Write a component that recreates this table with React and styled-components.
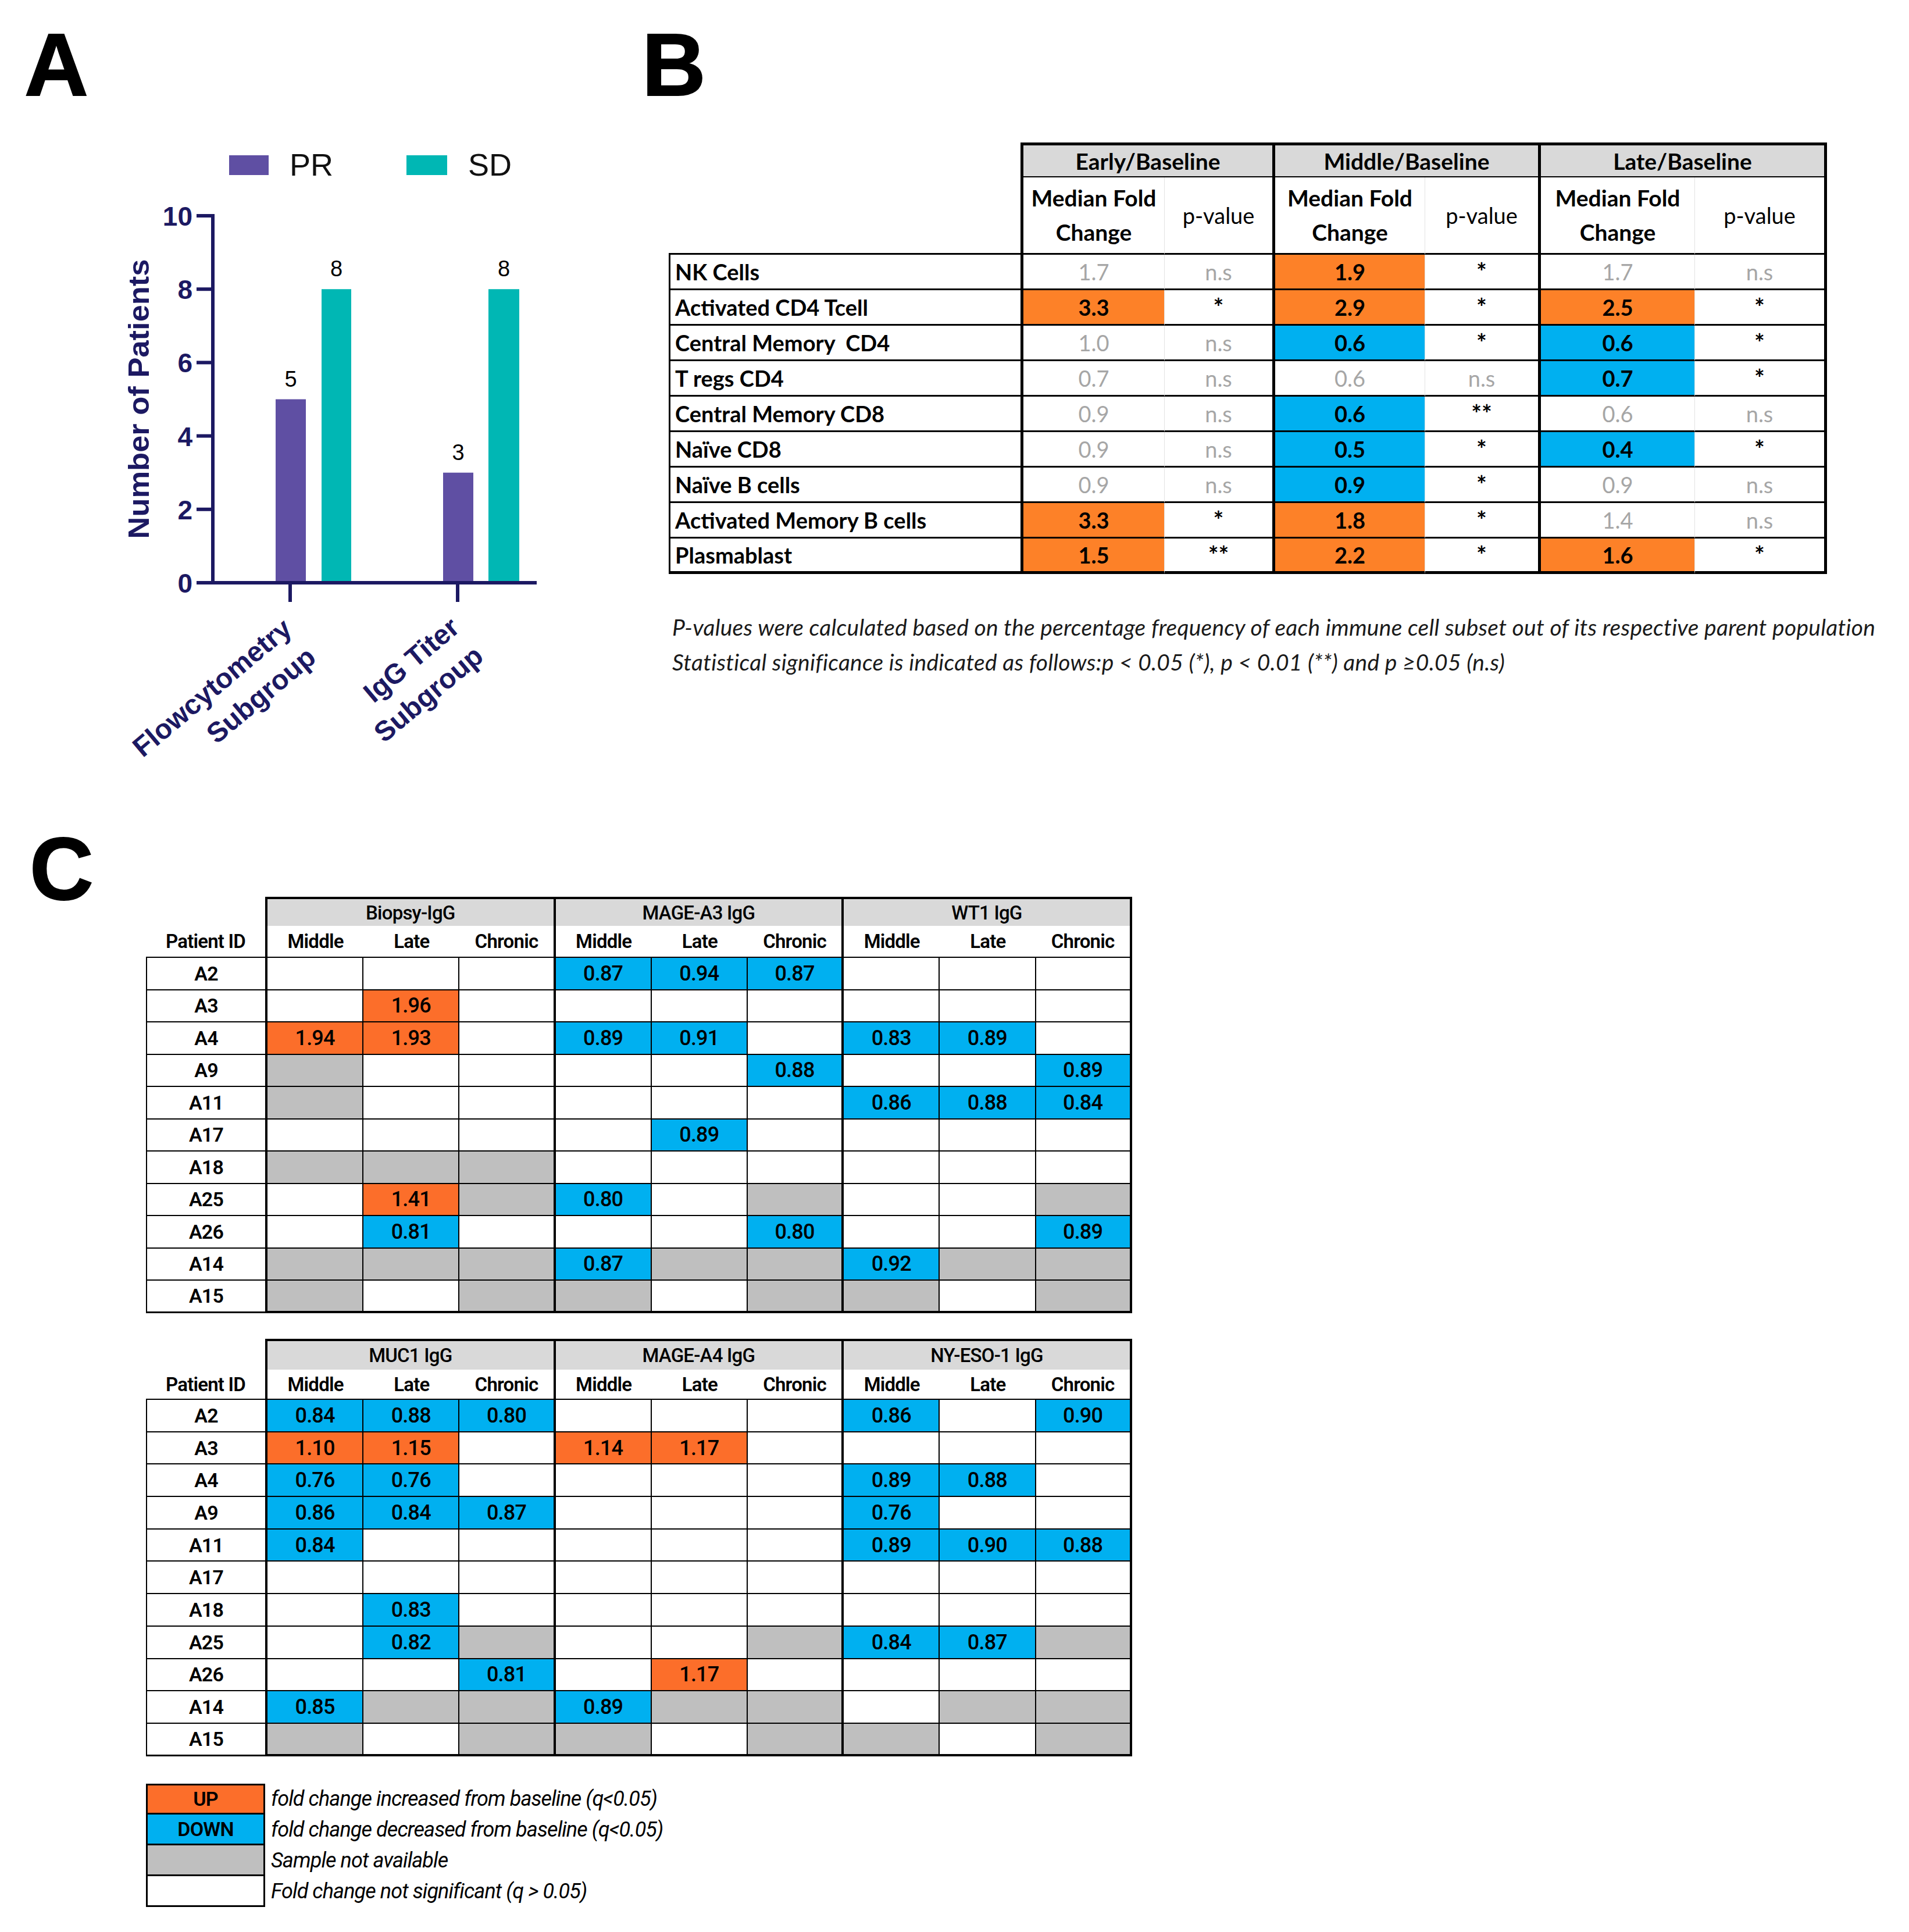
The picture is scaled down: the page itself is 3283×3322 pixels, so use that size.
import React from 'react';
import styled, { createGlobalStyle } from 'styled-components';

const ORANGE_B = '#fd8128';
const ORANGE_C = '#fc6e2a';
const BLUE = '#00b0f0';
const NA_GREY = '#bfbfbf';
const HEAD_GREY = '#d9d9d9';
const NAVY = '#1c1962';
const PURPLE = '#5f4fa3';
const TEAL = '#00b7b4';

const GlobalStyle = createGlobalStyle`
  html, body {
    margin: 0;
    padding: 0;
    background: #fff;
  }
  body {
    font-family: Lato, "Open Sans", sans-serif;
    color: #000;
  }
`;

const Page = styled.div`
  width: 3283px;
  height: 3322px;
  padding-top: 56px;
  box-sizing: border-box;
  overflow: hidden;
`;

const TopRow = styled.div`
  display: flex;
  height: 1383px;
`;

const PanelLabel = styled.div`
  font-family: "Liberation Sans", Arial, sans-serif;
  font-weight: 700;
  font-size: 152px;
  line-height: 110px;
  height: 100px;
  margin-left: ${p => p.$left}px;
  -webkit-text-stroke: 2px #000;
`;

const PanelA = styled.div`
  width: 1112px;
  display: flex;
  flex-direction: column;
`;

const PanelB = styled.div`
  flex: 1;
  display: flex;
  flex-direction: column;
`;

const ChartSvg = styled.svg`
  display: block;
  margin-top: 44px;
`;

/* ---------- panel B table ---------- */

const BGrid = styled.div`
  display: grid;
  grid-template-columns: 610px 243px 190px 258px 199px 265px 227px;
  grid-template-rows: 60px 133px repeat(9, 61px);
  margin: 89px 0 0 38px;
  width: 1992px;
  font-family: Lato, "Open Sans", sans-serif;
  font-size: 38px;
`;

const BCorner = styled.div`
  grid-column: 1;
  grid-row: 1 / span 2;
  border-right: 5px solid #000;
  border-bottom: 3px solid #000;
`;

const BGroupHead = styled.div`
  grid-column: span 2;
  background: ${HEAD_GREY};
  border-top: 5px solid #000;
  border-right: 5px solid #000;
  border-bottom: 2px solid #000;
  display: flex;
  align-items: center;
  justify-content: center;
  font-weight: 700;
  font-size: 39px;
`;

const BSubHead = styled.div`
  border-right: ${p => (p.$end ? '5px solid #000' : '1px solid #e2e2e2')};
  border-bottom: 3px solid #000;
  display: flex;
  align-items: center;
  justify-content: center;
  text-align: center;
  font-weight: ${p => (p.$bold ? 700 : 400)};
  font-size: ${p => (p.$bold ? 39 : 38)}px;
  line-height: 59px;
`;

const BRowLabel = styled.div`
  border-left: 3px solid #000;
  border-right: 5px solid #000;
  border-bottom: ${p => (p.$last ? 5 : 3)}px solid #000;
  display: flex;
  align-items: center;
  padding-left: 8px;
  font-weight: 700;
  white-space: pre;
`;

const BCell = styled.div`
  background: ${p => (p.$tone === 'o' ? ORANGE_B : p.$tone === 'b' ? BLUE : '#fff')};
  color: ${p => (p.$muted ? '#a6a6a6' : '#000')};
  font-weight: ${p => (p.$muted ? 400 : 700)};
  font-size: ${p => (p.$star ? 42 : 38)}px;
  border-right: ${p => (p.$end ? '5px solid #000' : '1px solid #e2e2e2')};
  border-bottom: ${p => (p.$last ? 5 : 3)}px solid #000;
  display: flex;
  align-items: center;
  justify-content: center;
`;

const Caption = styled.div`
  margin: 61px 0 0 44px;
  font-family: Lato, "Open Sans", sans-serif;
  font-style: italic;
  font-size: 39px;
  letter-spacing: 0.25px;
  line-height: 60px;
  color: #1a1a1a;
  white-space: nowrap;
`;

/* ---------- panel C tables ---------- */

const PanelC = styled.div`
  display: flex;
  flex-direction: column;
`;

const CGrid = styled.div`
  display: grid;
  grid-template-columns: 209px repeat(9, 165.2px);
  grid-template-rows: ${p => p.$head}px ${p => p.$sub}px repeat(11, ${p => p.$row}px);
  margin: ${p => p.$top}px 0 0 251px;
  width: 1696px;
  font-family: Roboto, "Open Sans", sans-serif;
  font-weight: 500;
`;

const CCorner = styled.div`
  border-right: 4px solid #000;
`;

const CGroupHead = styled.div`
  grid-column: span 3;
  background: ${HEAD_GREY};
  border-top: 4px solid #000;
  border-right: 4px solid #000;
  display: flex;
  align-items: center;
  justify-content: center;
  font-size: 33px;
  letter-spacing: -0.8px;
`;

const CSubHead = styled.div`
  border-right: ${p => (p.$end ? '4px solid #000' : 'none')};
  border-bottom: 2px solid #000;
  display: flex;
  align-items: center;
  justify-content: center;
  font-size: 33px;
  font-weight: 600;
  letter-spacing: -0.8px;
  white-space: nowrap;
`;

const CRowLabel = styled.div`
  border-left: 2px solid #000;
  border-right: 4px solid #000;
  border-bottom: ${p => (p.$last ? 3 : 2)}px solid #000;
  display: flex;
  align-items: center;
  justify-content: center;
  font-size: 34px;
  font-weight: 600;
  letter-spacing: -0.8px;
`;

const CCell = styled.div`
  background: ${p =>
    p.$tone === 'o' ? ORANGE_C : p.$tone === 'b' ? BLUE : p.$tone === 'g' ? NA_GREY : '#fff'};
  border-right: ${p => (p.$end ? 4 : 2)}px solid #000;
  border-bottom: ${p => (p.$last ? 4 : 2)}px solid #000;
  display: flex;
  align-items: center;
  justify-content: center;
  font-size: 36px;
  letter-spacing: -0.8px;
`;

const Legend = styled.div`
  display: grid;
  grid-template-columns: 205px auto;
  grid-auto-rows: 53px;
  margin: 47px 0 0 251px;
`;

const Swatch = styled.div`
  background: ${p => p.$bg};
  border: 3px solid #000;
  border-top-width: ${p => (p.$first ? 3 : 0)}px;
  display: flex;
  align-items: center;
  justify-content: center;
  font-family: Roboto, "Open Sans", sans-serif;
  font-weight: 600;
  font-size: 34px;
  letter-spacing: -0.8px;
`;

const LegendText = styled.div`
  display: flex;
  align-items: center;
  padding-left: 10px;
  font-family: Roboto, "Open Sans", sans-serif;
  font-style: italic;
  font-size: 36px;
  letter-spacing: -0.9px;
  white-space: nowrap;
`;

/* ---------- data ---------- */

const bRows = [
  ['NK Cells', '1.7', 'n.s', 'o1.9', '*', '1.7', 'n.s'],
  ['Activated CD4 Tcell', 'o3.3', '*', 'o2.9', '*', 'o2.5', '*'],
  ['Central Memory  CD4', '1.0', 'n.s', 'b0.6', '*', 'b0.6', '*'],
  ['T regs CD4', '0.7', 'n.s', '0.6', 'n.s', 'b0.7', '*'],
  ['Central Memory CD8', '0.9', 'n.s', 'b0.6', '**', '0.6', 'n.s'],
  ['Naïve CD8', '0.9', 'n.s', 'b0.5', '*', 'b0.4', '*'],
  ['Naïve B cells', '0.9', 'n.s', 'b0.9', '*', '0.9', 'n.s'],
  ['Activated Memory B cells', 'o3.3', '*', 'o1.8', '*', '1.4', 'n.s'],
  ['Plasmablast', 'o1.5', '**', 'o2.2', '*', 'o1.6', '*'],
];

const ids = ['A2', 'A3', 'A4', 'A9', 'A11', 'A17', 'A18', 'A25', 'A26', 'A14', 'A15'];

const cTop = {
  groups: ['Biopsy-IgG', 'MAGE-A3 IgG', 'WT1 IgG'],
  rows: [
    ['', '', '', 'b0.87', 'b0.94', 'b0.87', '', '', ''],
    ['', 'o1.96', '', '', '', '', '', '', ''],
    ['o1.94', 'o1.93', '', 'b0.89', 'b0.91', '', 'b0.83', 'b0.89', ''],
    ['g', '', '', '', '', 'b0.88', '', '', 'b0.89'],
    ['g', '', '', '', '', '', 'b0.86', 'b0.88', 'b0.84'],
    ['', '', '', '', 'b0.89', '', '', '', ''],
    ['g', 'g', 'g', '', '', '', '', '', ''],
    ['', 'o1.41', 'g', 'b0.80', '', 'g', '', '', 'g'],
    ['', 'b0.81', '', '', '', 'b0.80', '', '', 'b0.89'],
    ['g', 'g', 'g', 'b0.87', 'g', 'g', 'b0.92', 'g', 'g'],
    ['g', '', 'g', 'g', '', 'g', 'g', '', 'g'],
  ],
};

const cBottom = {
  groups: ['MUC1 IgG', 'MAGE-A4 IgG', 'NY-ESO-1 IgG'],
  rows: [
    ['b0.84', 'b0.88', 'b0.80', '', '', '', 'b0.86', '', 'b0.90'],
    ['o1.10', 'o1.15', '', 'o1.14', 'o1.17', '', '', '', ''],
    ['b0.76', 'b0.76', '', '', '', '', 'b0.89', 'b0.88', ''],
    ['b0.86', 'b0.84', 'b0.87', '', '', '', 'b0.76', '', ''],
    ['b0.84', '', '', '', '', '', 'b0.89', 'b0.90', 'b0.88'],
    ['', '', '', '', '', '', '', '', ''],
    ['', 'b0.83', '', '', '', '', '', '', ''],
    ['', 'b0.82', 'g', '', '', 'g', 'b0.84', 'b0.87', 'g'],
    ['', '', 'b0.81', '', 'o1.17', '', '', '', ''],
    ['b0.85', 'g', 'g', 'b0.89', 'g', 'g', '', 'g', 'g'],
    ['g', '', 'g', 'g', '', 'g', 'g', '', 'g'],
  ],
};

const tone = s => (s && 'obg'.includes(s[0]) ? s[0] : null);
const text = s => (tone(s) ? s.slice(1) : s);
const isStar = s => s === '*' || s === '**';

/* ---------- panel A chart ---------- */

const Y0 = 1002;
const UNIT = (1002 - 371) / 10;
const yOf = v => Y0 - v * UNIT;

const bars = [
  { x: 474, w: 52, v: 5, c: PURPLE },
  { x: 553, w: 51, v: 8, c: TEAL },
  { x: 762, w: 52, v: 3, c: PURPLE },
  { x: 840, w: 53, v: 8, c: TEAL },
];

const Chart = () => (
  <ChartSvg width="1112" height="1130" viewBox="0 200 1112 1130">
    <rect x="394" y="267" width="68" height="34" fill={PURPLE} />
    <text x="498" y="302" fontFamily="Liberation Sans, Arial, sans-serif" fontSize="54" fill="#111">PR</text>
    <rect x="699" y="267" width="70" height="34" fill={TEAL} />
    <text x="805" y="302" fontFamily="Liberation Sans, Arial, sans-serif" fontSize="54" fill="#111">SD</text>

    {bars.map(b => (
      <g key={b.x}>
        <rect x={b.x} y={yOf(b.v)} width={b.w} height={Y0 - yOf(b.v)} fill={b.c} />
        <text
          x={b.x + b.w / 2}
          y={yOf(b.v) - 22}
          textAnchor="middle"
          fontFamily="Liberation Sans, Arial, sans-serif"
          fontSize="38"
          fill="#000"
        >
          {b.v}
        </text>
      </g>
    ))}

    <g stroke={NAVY} strokeWidth="6" fill="none">
      <line x1="366" y1="368" x2="366" y2="1005" />
      <line x1="338" y1={Y0} x2="923" y2={Y0} />
      {[2, 4, 6, 8, 10].map(v => (
        <line key={v} x1="338" y1={yOf(v)} x2="366" y2={yOf(v)} />
      ))}
      <line x1="499" y1={Y0} x2="499" y2="1035" />
      <line x1="787" y1={Y0} x2="787" y2="1035" />
    </g>

    <g fontFamily="Liberation Sans, Arial, sans-serif" fontWeight="700" fontSize="46" fill={NAVY} textAnchor="end">
      {[0, 2, 4, 6, 8, 10].map(v => (
        <text key={v} x="331" y={yOf(v) + 17}>{v}</text>
      ))}
    </g>

    <text
      transform="translate(256 686) rotate(-90)"
      textAnchor="middle"
      fontFamily="Liberation Sans, Arial, sans-serif"
      fontWeight="700"
      fontSize="50"
      fill={NAVY}
      textLength="481"
      lengthAdjust="spacingAndGlyphs"
    >
      Number of Patients
    </text>

    <g fontFamily="Liberation Sans, Arial, sans-serif" fontWeight="700" fontSize="48" fill={NAVY} textAnchor="end">
      <g transform="translate(505 1086) rotate(-40)">
        <text x="0" y="0">Flowcytometry</text>
        <text x="0" y="64">Subgroup</text>
      </g>
      <g transform="translate(793 1084) rotate(-40)">
        <text x="0" y="0">IgG Titer</text>
        <text x="0" y="64">Subgroup</text>
      </g>
    </g>
  </ChartSvg>
);

/* ---------- tables ---------- */

const BTable = () => (
  <BGrid>
    <BCorner />
    {['Early/Baseline', 'Middle/Baseline', 'Late/Baseline'].map(g => (
      <BGroupHead key={g}>{g}</BGroupHead>
    ))}
    {[0, 1, 2].map(i => (
      <React.Fragment key={i}>
        <BSubHead $bold>
          Median Fold
          <br />
          Change
        </BSubHead>
        <BSubHead $end>p-value</BSubHead>
      </React.Fragment>
    ))}
    {bRows.map((r, ri) => {
      const last = ri === bRows.length - 1;
      return (
        <React.Fragment key={r[0]}>
          <BRowLabel $last={last}>{r[0]}</BRowLabel>
          {r.slice(1).map((v, ci) => (
            <BCell
              key={ci}
              $tone={tone(v)}
              $muted={!tone(v) && !isStar(v)}
              $star={isStar(v)}
              $end={ci % 2 === 1}
              $last={last}
            >
              {text(v)}
            </BCell>
          ))}
        </React.Fragment>
      );
    })}
  </BGrid>
);

const CTable = ({ data, top, head, sub, row }) => (
  <CGrid $top={top} $head={head} $sub={sub} $row={row}>
    <CCorner />
    {data.groups.map(g => (
      <CGroupHead key={g}>{g}</CGroupHead>
    ))}
    <CSubHead $end>Patient ID</CSubHead>
    {[0, 1, 2].map(i => (
      <React.Fragment key={i}>
        <CSubHead>Middle</CSubHead>
        <CSubHead>Late</CSubHead>
        <CSubHead $end>Chronic</CSubHead>
      </React.Fragment>
    ))}
    {data.rows.map((r, ri) => {
      const last = ri === data.rows.length - 1;
      return (
        <React.Fragment key={ids[ri]}>
          <CRowLabel $last={last}>{ids[ri]}</CRowLabel>
          {r.map((v, ci) => (
            <CCell key={ci} $tone={tone(v)} $end={ci % 3 === 2} $last={last}>
              {tone(v) === 'g' ? '' : text(v)}
            </CCell>
          ))}
        </React.Fragment>
      );
    })}
  </CGrid>
);

const legendItems = [
  { bg: ORANGE_C, label: 'UP', text: 'fold change increased from baseline (q<0.05)' },
  { bg: BLUE, label: 'DOWN', text: 'fold change decreased from baseline (q<0.05)' },
  { bg: NA_GREY, label: '', text: 'Sample not available' },
  { bg: '#fff', label: '', text: 'Fold change not significant (q > 0.05)' },
];

export default function App() {
  return (
    <Page>
      <GlobalStyle />
      <TopRow>
        <PanelA>
          <PanelLabel $left={42}>A</PanelLabel>
          <Chart />
        </PanelA>
        <PanelB>
          <PanelLabel $left={-8}>B</PanelLabel>
          <BTable />
          <Caption>
            P-values were calculated based on the percentage frequency of each immune cell subset out of its respective parent population
            <br />
            Statistical significance is indicated as follows:p &lt; 0.05 (*), p &lt; 0.01 (**) and p ≥0.05 (n.s)
          </Caption>
        </PanelB>
      </TopRow>
      <PanelC>
        <PanelLabel $left={51}>C</PanelLabel>
        <CTable data={cTop} top={3} head={50} sub={55} row={55.5} />
        <CTable data={cBottom} top={44.5} head={53} sub={52} row={55.7} />
        <Legend>
          {legendItems.map((it, i) => (
            <React.Fragment key={it.text}>
              <Swatch $bg={it.bg} $first={i === 0}>{it.label}</Swatch>
              <LegendText>{it.text}</LegendText>
            </React.Fragment>
          ))}
        </Legend>
      </PanelC>
    </Page>
  );
}
